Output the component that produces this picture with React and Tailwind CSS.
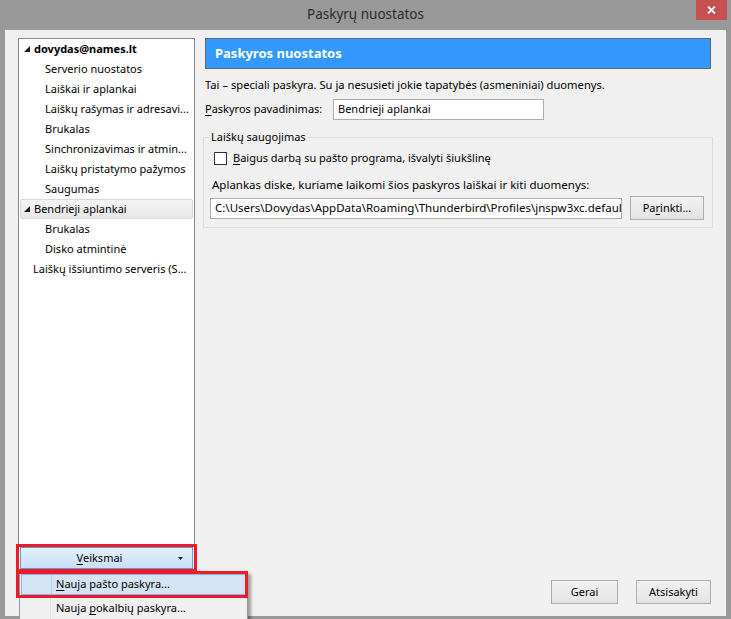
import React from "react";

const font = { fontFamily: '"Noto Sans", "Open Sans", sans-serif' };

function Tri() {
  return (
    <svg width="6" height="6" viewBox="0 0 6 6" className="shrink-0">
      <polygon points="6,0 6,6 0,6" fill="#1a1a1a" />
    </svg>
  );
}

const treeRows = [
  { t: "dovydas@names.lt", lvl: 0, tri: true, bold: true },
  { t: "Serverio nuostatos", lvl: 1 },
  { t: "Laiškai ir aplankai", lvl: 1 },
  { t: "Laiškų rašymas ir adresavi...", lvl: 1 },
  { t: "Brukalas", lvl: 1 },
  { t: "Sinchronizavimas ir atmin...", lvl: 1 },
  { t: "Laiškų pristatymo pažymos", lvl: 1 },
  { t: "Saugumas", lvl: 1 },
  { t: "Bendrieji aplankai", lvl: 0, tri: true, sel: true },
  { t: "Brukalas", lvl: 1 },
  { t: "Disko atmintinė", lvl: 1 },
  { t: "Laiškų išsiuntimo serveris (S...", lvl: 0 },
];

function TreeRow({ r }) {
  const base =
    "h-[20px] flex items-center whitespace-nowrap overflow-hidden text-[11px] text-black";
  if (r.lvl === 1) {
    return <div className={base + " pl-[26px]"}>{r.t}</div>;
  }
  if (r.tri) {
    return (
      <div
        className={
          base +
          " pl-[3px] mx-[1px] " +
          (r.sel
            ? "bg-gradient-to-b from-[#f4f4f4] to-[#e8e8e8] border border-[#d9d9d9] rounded-[2px]"
            : "border border-transparent")
        }
      >
        <span className="flex items-center mr-[4px]">
          <Tri />
        </span>
        <span className={r.bold ? "font-bold" : ""}>{r.t}</span>
      </div>
    );
  }
  return <div className={base + " pl-[14px]"}>{r.t}</div>;
}

export default function App() {
  return (
    <div
      className="w-[731px] h-[619px] bg-[#999999] relative overflow-hidden flex flex-col"
      style={font}
    >
      {/* title bar */}
      <div className="h-[30px] relative flex items-center justify-center text-[13.5px] text-[#2b2b2b]">
        <span className="-mt-[1px]">Paskyrų nuostatos</span>
        <div className="absolute right-[4px] top-0 w-[31px] h-[20px] bg-[#c75050] flex items-center justify-center">
          <svg width="9" height="8" viewBox="0 0 9 8">
            <path d="M1 0.5 L8 7.5 M8 0.5 L1 7.5" stroke="#fff" strokeWidth="1.8" />
          </svg>
        </div>
      </div>

      {/* client area */}
      <div className="mx-[5px] h-[586px] bg-[#f0f0f0] flex pl-[13px] pt-[8px] pb-[12px] text-[11px] text-black">
        {/* left column */}
        <div className="w-[177px] flex flex-col">
          <div className="h-[507px] bg-white border border-[#828790] flex flex-col">
            {treeRows.map((r, i) => (
              <TreeRow key={i} r={r} />
            ))}
          </div>
          <div className="mt-[2px] mx-[2px] h-[22px] border border-[#5b9be0] bg-gradient-to-b from-[#e4f0fc] to-[#c8e0f8] flex items-center relative">
            <span className="flex-1 text-center pr-[14px]">
              <span className="underline underline-offset-2">V</span>eiksmai
            </span>
            <svg width="5" height="3" viewBox="0 0 5 3" className="absolute right-[9px] top-[9px]">
              <polygon points="0,0 5,0 2.5,3" fill="#222" />
            </svg>
          </div>
        </div>

        {/* right column */}
        <div className="ml-[8px] w-[510px] flex flex-col">
          <div className="ml-[2px] w-[506px] h-[31px] bg-[#3399ff] border border-[#5f6875] flex items-center pl-[9px] text-white font-bold text-[13px]">
            Paskyros nuostatos
          </div>
          <div className="mt-[8px] pl-[2px] h-[16px] leading-[16px] whitespace-nowrap text-[11.2px]">
            Tai – speciali paskyra. Su ja nesusieti jokie tapatybės (asmeniniai) duomenys.
          </div>
          <div className="mt-[6px] pl-[2px] h-[21px] flex items-center">
            <span className="w-[128px] whitespace-nowrap">
              <span className="underline underline-offset-2">P</span>askyros pavadinimas:
            </span>
            <div className="w-[211px] h-[21px] bg-white border border-[#abadb3] flex items-center pl-[4px]">
              Bendrieji aplankai
            </div>
          </div>

          <fieldset className="mt-[9px] border border-[#dcdcdc] pb-[7px]">
            <legend className="ml-[5px] px-[2px] h-[16px] leading-[16px]">Laiškų saugojimas</legend>
            <div className="mt-[5px] h-[16px] flex items-center pl-[10px]">
              <div className="w-[13px] h-[13px] bg-white border border-[#333333]"></div>
              <span className="ml-[6px] whitespace-nowrap">
                <span className="underline underline-offset-2">B</span>aigus darbą su pašto programa, išvalyti šiukšlinę
              </span>
            </div>
            <div className="mt-[11px] h-[16px] leading-[16px] pl-[8px] whitespace-nowrap text-[11.5px]">
              Aplankas diske, kuriame laikomi šios paskyros laiškai ir kiti duomenys:
            </div>
            <div className="mt-[3px] h-[24px] flex items-center pl-[6px]">
              <div className="w-[412px] h-[21px] bg-white border border-[#abadb3] flex items-center pl-[4px] overflow-hidden whitespace-nowrap text-[11.5px]">
                C:\Users\Dovydas\AppData\Roaming\Thunderbird\Profiles\jnspw3xc.default
              </div>
              <div className="ml-[8px] w-[74px] h-[24px] border border-[#adadad] bg-gradient-to-b from-[#f2f2f2] to-[#e3e3e3] flex items-center justify-center">
                Pa<span className="underline underline-offset-2">r</span>inkti...
              </div>
            </div>
          </fieldset>

          <div className="flex-1"></div>

          <div className="flex justify-end pr-[2px] gap-[18px]">
            <div className="w-[67px] h-[24px] border border-[#adadad] bg-gradient-to-b from-[#f2f2f2] to-[#e3e3e3] flex items-center justify-center">
              Gerai
            </div>
            <div className="w-[75px] h-[24px] border border-[#adadad] bg-gradient-to-b from-[#f2f2f2] to-[#e3e3e3] flex items-center justify-center">
              Atsisakyti
            </div>
          </div>
        </div>
      </div>

      {/* dropdown menu */}
      <div className="absolute left-[19px] top-[571px] w-[229px] h-[60px] bg-[#f0f0f0] border border-[#979797] shadow-[3px_3px_3px_rgba(0,0,0,0.35)] pt-[2px] px-[1px] flex flex-col gap-[3px] text-[11px] text-black">
        <div className="absolute left-[30px] top-0 bottom-0 w-[1px] bg-[#e2e3e3]"></div>
        <div className="relative h-[21px] bg-[#d5e4f4] border border-[#86b6e8] flex items-center pl-[34px] whitespace-nowrap">
          <div className="absolute left-[29px] top-0 bottom-0 w-[1px] bg-[#b9d2ec]"></div>
          <span>
            <span className="underline underline-offset-2">N</span>auja pašto paskyra...
          </span>
        </div>
        <div className="relative h-[21px] flex items-center pl-[35px] whitespace-nowrap">
          <span>
            Nauja <span className="underline underline-offset-2">p</span>okalbių paskyra...
          </span>
        </div>
      </div>

      {/* red annotation boxes */}
      <div className="absolute left-[16px] top-[544px] w-[181px] h-[28px] border-[3px] border-[#ed1c24] pointer-events-none"></div>
      <div className="absolute left-[16px] top-[571px] w-[232px] h-[27px] border-[3px] border-[#ed1c24] pointer-events-none"></div>
    </div>
  );
}
